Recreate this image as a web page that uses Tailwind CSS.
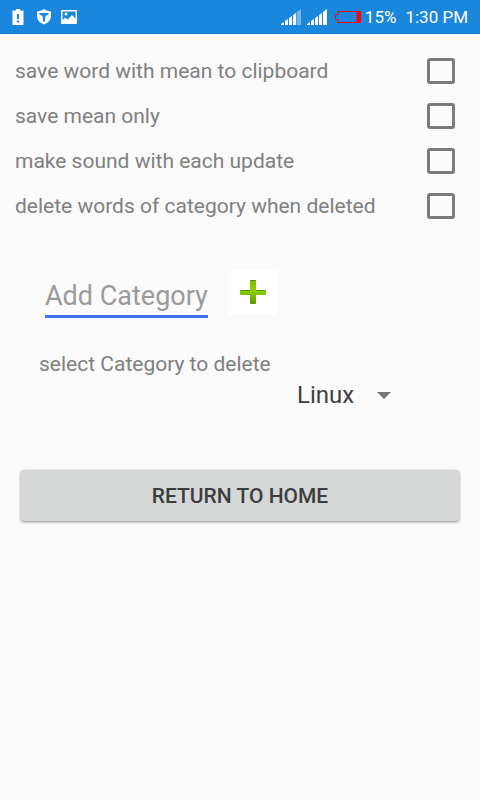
<!DOCTYPE html>
<html lang="en">
<head>
<meta charset="utf-8">
<meta name="viewport" content="width=device-width, initial-scale=1">
<title>Settings</title>
<script src="https://cdn.jsdelivr.net/npm/@tailwindcss/browser@4"></script>
</head>
<body class="min-h-screen bg-[#fafafa] font-['Roboto',sans-serif] text-[21px] leading-6 text-[#808080]">
<header class="flex h-[34px] items-center justify-between border-b border-[#1379d0] bg-[#1a87dc] px-3 text-[17px] text-white">
  <div class="flex items-center gap-3">
    <svg class="h-4 w-3" viewBox="0 0 12 16" aria-hidden="true"><path fill="#fff" d="M1 1.500h3V0h4v1.500h3a.5.5 0 0 1 .5.5v13.500a.5.5 0 0 1-.5.5H1a.5.5 0 0 1-.5-.5V2a.5.5 0 0 1 .5-.5z"/><path fill="#1a87dc" d="M5 5h2v5H5zM5 11.500h2v2H5z"/></svg>
    <svg class="h-4 w-4" viewBox="0 0 16 16" aria-hidden="true"><path fill="#fff" d="M8 0c2 1.500 4.500 2.300 7 2.500V7c0 4-3 7-7 8.500C4 14 1 11 1 7V2.500C3.500 2.300 6 1.500 8 0z"/><path fill="#1a87dc" d="M3 4.300c3-.8 7-.8 10 0-.5 1.500-1.800 2.200-3.500 2.400L9 12l-1 1-1-1-.5-5.300C4.800 6.500 3.500 5.800 3 4.300z"/></svg>
    <svg class="-ml-1 h-4 w-[18px]" viewBox="0 0 18 16" aria-hidden="true"><path fill="#fff" fill-rule="evenodd" d="M2 1h14a1 1 0 0 1 1 1v12a1 1 0 0 1-1 1H2a1 1 0 0 1-1-1V2a1 1 0 0 1 1-1zm.500 1.500v8.500L5 8.500l2.500 2L12 6l3.500 3.500v-7z"/><circle cx="6" cy="5" r="1.500" fill="#fff"/></svg>
  </div>
  <div class="flex items-center">
    <svg class="mr-[6px] h-4 w-5" viewBox="0 0 20 16" aria-hidden="true"><path fill="#fff" d="M0 16v-1l3-2v3zM4 16v-4l3-2v6zM8 16V9l3-2v9zM12 16V6l3-2v12z"/><path fill="#fff" fill-opacity=".4" d="M15.500 16V3L20 0v16z"/></svg>
    <svg class="mr-2 h-4 w-5" viewBox="0 0 20 16" aria-hidden="true"><path fill="#fff" d="M0 16v-1l3-2v3zM4 16v-4l3-2v6zM8 16V9l3-2v9zM12 16V6l3-2v12zM16 16V3l4-3v16z"/></svg>
    <svg class="mr-1 h-[14px] w-[26px]" viewBox="0 0 26 14" aria-hidden="true"><path fill="none" stroke="red" d="M3 1.500h22v11H3v-3H1.500a1 1 0 0 1-1-1v-3a1 1 0 0 1 1-1H3z"/><path fill="red" d="M21.500 1H26v12h-4.500z"/></svg>
    <span class="mr-[9px]">15%</span>
    <time>1:30 PM</time>
  </div>
</header>
<main class="pt-[14px]">
  <section>
    <div class="flex h-[45px] items-center justify-between pr-[25px] pl-[15px]"><label for="clip">save word with mean to clipboard</label><input id="clip" type="checkbox" class="h-[26px] w-7 shrink-0 appearance-none rounded-[3px] border-3 border-[#7b7b7b] checked:bg-[#7b7b7b]"></div>
    <div class="flex h-[45px] items-center justify-between pr-[25px] pl-[15px]"><label for="mean">save mean only</label><input id="mean" type="checkbox" class="h-[26px] w-7 shrink-0 appearance-none rounded-[3px] border-3 border-[#7b7b7b] checked:bg-[#7b7b7b]"></div>
    <div class="flex h-[45px] items-center justify-between pr-[25px] pl-[15px]"><label for="sound">make sound with each update</label><input id="sound" type="checkbox" class="h-[26px] w-7 shrink-0 appearance-none rounded-[3px] border-3 border-[#7b7b7b] checked:bg-[#7b7b7b]"></div>
    <div class="flex h-[45px] items-center justify-between pr-[25px] pl-[15px]"><label for="words">delete words of category when deleted</label><input id="words" type="checkbox" class="h-[26px] w-7 shrink-0 appearance-none rounded-[3px] border-3 border-[#7b7b7b] checked:bg-[#7b7b7b]"></div>
  </section>
  <form class="mt-[42px] flex items-start pl-[45px]">
    <input type="text" aria-label="Category name" placeholder="Add Category" class="h-12 w-[163px] border-b-3 border-[#4170f2] pt-[6px] text-[27px] outline-none placeholder:text-[#9b9b9b]">
    <button type="button" aria-label="Add category" class="ml-[21px] flex h-[45px] w-12 items-center justify-center bg-white">
      <svg class="h-[26px] w-[26px]" viewBox="0 0 26 26" aria-hidden="true">
        <defs><linearGradient id="leaf" x1="0" y1="0" x2="0" y2="1"><stop offset="0" stop-color="#7fbd00"/><stop offset=".45" stop-color="#8fd000"/><stop offset="1" stop-color="#559b08"/></linearGradient></defs>
        <path fill="url(#leaf)" d="M11 0h4a1 1 0 0 1 1 1v9h9a1 1 0 0 1 1 1v3a1 1 0 0 1-1 1h-9v8a1 1 0 0 1-1 1h-4a1 1 0 0 1-1-1v-8H1a1 1 0 0 1-1-1v-3a1 1 0 0 1 1-1h9V1a1 1 0 0 1 1-1z"/>
        <path fill="#4d8a0c" d="M11 0h4l1 1h-6zM1 10h9v1H0zM16 10h9l1 1H16z"/>
      </svg>
    </button>
  </form>
  <section class="mt-[34px]">
    <label for="category" class="block pl-[39px]">select Category to delete</label>
    <div class="mt-[5px] flex pl-[297px]">
      <div class="grid items-center">
        <select id="category" class="col-start-1 row-start-1 w-[94px] appearance-none text-2xl leading-7 text-[#3f3f3f]"><option>Linux</option></select>
        <svg class="pointer-events-none col-start-1 row-start-1 h-[7px] w-[14px] justify-self-end" viewBox="0 0 14 7" aria-hidden="true"><path fill="#757575" d="M0 0h14L7 7z"/></svg>
      </div>
    </div>
  </section>
  <div class="mt-[61px] px-[21px]">
    <button type="button" class="block h-[51px] w-full rounded-[3px] bg-[#d6d8d7] font-medium text-[#3c3d3d] shadow-[0_1px_3px_rgba(0,0,0,0.45)]">RETURN TO HOME</button>
  </div>
</main>
</body>
</html>
